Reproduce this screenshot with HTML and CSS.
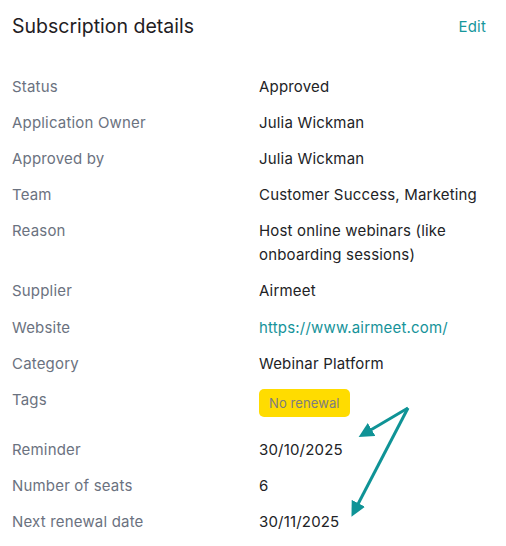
FILE: index.html
```html
<!DOCTYPE html>
<html>
<head>
<meta charset="utf-8">
<link rel="stylesheet" href="styles.css">
</head>
<body>
<div class="card">
  <div class="header">
    <h2 class="title">Subscription details</h2>
    <a class="edit">Edit</a>
  </div>
  <div class="rows">
    <div class="row"><div class="label">Status</div><div class="value">Approved</div></div>
    <div class="row"><div class="label">Application Owner</div><div class="value">Julia Wickman</div></div>
    <div class="row"><div class="label">Approved by</div><div class="value">Julia Wickman</div></div>
    <div class="row"><div class="label">Team</div><div class="value">Customer Success, Marketing</div></div>
    <div class="row"><div class="label">Reason</div><div class="value">Host online webinars (like onboarding sessions)</div></div>
    <div class="row"><div class="label">Supplier</div><div class="value">Airmeet</div></div>
    <div class="row"><div class="label">Website</div><div class="value"><a class="link">https://www.airmeet.com/</a></div></div>
    <div class="row"><div class="label">Category</div><div class="value">Webinar Platform</div></div>
    <div class="row"><div class="label">Tags</div><div class="value tags"><span class="tag">No renewal</span></div></div>
    <div class="row"><div class="label">Reminder</div><div class="value">30/10/2025</div></div>
    <div class="row"><div class="label">Number of seats</div><div class="value">6</div></div>
    <div class="row"><div class="label">Next renewal date</div><div class="value">30/11/2025</div></div>
  </div>
  <svg class="arrows" width="506" height="546" viewBox="0 0 506 546">
    <defs>
      <marker id="ah" markerWidth="5" markerHeight="5" refX="1" refY="2.5" orient="auto" markerUnits="strokeWidth">
        <path d="M0,0 L5,2.5 L0,5 z" fill="#0f9396"/>
      </marker>
    </defs>
    <line x1="408" y1="408" x2="369" y2="431" stroke="#0f9396" stroke-width="3" marker-end="url(#ah)"/>
    <line x1="408" y1="408" x2="357" y2="506" stroke="#0f9396" stroke-width="3" marker-end="url(#ah)"/>
  </svg>
</div>
</body>
</html>
```
FILE: styles.css
```css
html, body {
  margin: 0;
  padding: 0;
  background: #ffffff;
}
body {
  font-family: Inter, "Noto Sans", sans-serif;
  color: #222326;
}
.card {
  position: relative;
  width: 506px;
  height: 546px;
  box-sizing: border-box;
  padding: 13px 20px 0 12px;
}
.header {
  display: flex;
  justify-content: space-between;
  align-items: center;
  height: 26px;
}
.title {
  margin: 0;
  font-size: 19.5px;
  font-weight: 400;
  color: #1f2023;
}
.edit {
  font-size: 15px;
  color: #16979c;
  font-weight: 400;
  letter-spacing: 0.2px;
}
.rows {
  display: flex;
  flex-direction: column;
  gap: 12.1px;
  margin-top: 36px;
}
.row {
  display: grid;
  grid-template-columns: 247px 1fr;
  font-size: 15px;
  line-height: 24px;
  letter-spacing: 0.18px;
}
.label {
  color: #6b7280;
}
.value {
  color: #222326;
}
.tags {
  display: flex;
  align-items: flex-start;
}
.link {
  color: #16939a;
}
.tag {
  margin-top: 1px;
  margin-bottom: 9px;
  height: 28px;
  line-height: 28px;
  padding: 0 10px;
  border-radius: 5px;
  background: #ffdc00;
  color: #7d7d80;
  font-size: 13px;
  letter-spacing: 0.1px;
}
.arrows {
  position: absolute;
  left: 0;
  top: 0;
  pointer-events: none;
}
```
